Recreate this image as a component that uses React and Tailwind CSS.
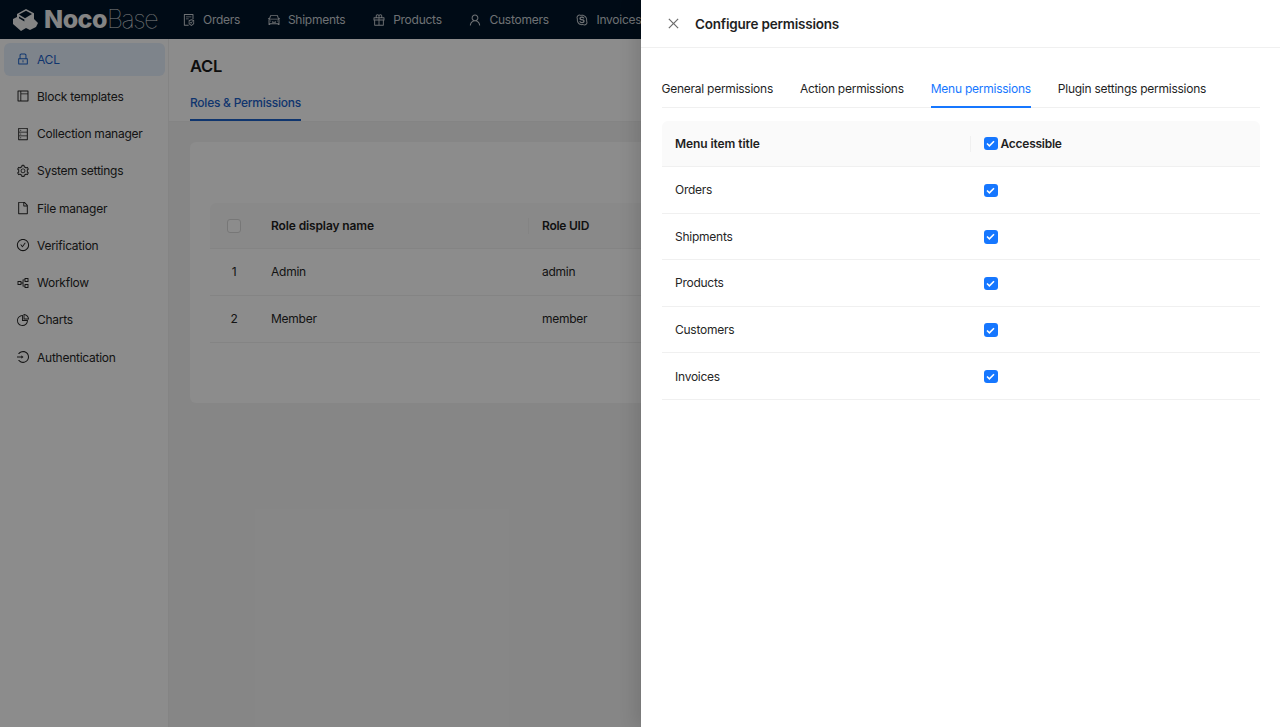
import {
  AiOutlineFileProtect, AiOutlineCar, AiOutlineGift, AiOutlineUser, AiOutlineSkype,
  AiOutlineLock, AiOutlineLayout, AiOutlineDatabase, AiOutlineSetting, AiOutlineFile,
  AiOutlineCheckCircle, AiOutlinePartition, AiOutlinePieChart, AiOutlineLogin, AiOutlineClose,
} from "react-icons/ai";

const topMenu = [
  { label: "Orders", icon: AiOutlineFileProtect },
  { label: "Shipments", icon: AiOutlineCar },
  { label: "Products", icon: AiOutlineGift },
  { label: "Customers", icon: AiOutlineUser },
  { label: "Invoices", icon: AiOutlineSkype },
];

const sideMenu = [
  { label: "ACL", icon: AiOutlineLock, active: true },
  { label: "Block templates", icon: AiOutlineLayout },
  { label: "Collection manager", icon: AiOutlineDatabase },
  { label: "System settings", icon: AiOutlineSetting },
  { label: "File manager", icon: AiOutlineFile },
  { label: "Verification", icon: AiOutlineCheckCircle },
  { label: "Workflow", icon: AiOutlinePartition },
  { label: "Charts", icon: AiOutlinePieChart },
  { label: "Authentication", icon: AiOutlineLogin },
];

const tabs = ["General permissions", "Action permissions", "Menu permissions", "Plugin settings permissions"];
const menuItems = ["Orders", "Shipments", "Products", "Customers", "Invoices"];

const Check = () => (
  <span className="w-[13.5px] h-[13.5px] rounded-[3px] bg-[#1677ff] flex items-center justify-center shrink-0">
    <svg width="9" height="7" viewBox="0 0 9 7" fill="none">
      <path d="M1 3.5 3.4 5.8 8 1.2" stroke="#fff" strokeWidth="1.6" />
    </svg>
  </span>
);

const Logo = () => (
  <div className="flex items-center pl-[13px] w-[170px] shrink-0">
    <svg width="25" height="22" viewBox="0 0 25 22" className="shrink-0">
      <path d="M4 5 13 0 21 4.3 21 10 25 14 23 18 17 21 13 19 8 22 0 15 0 10 4 8Z" fill="#f0f0f0" />
      <path d="M6 5.6 13 1.8 19 5 12 9.2Z" fill="#001529" />
      <path d="M6 7.4 11.4 10.6 11.4 12.4 6 9.2Z" fill="#001529" />
    </svg>
    <span className="ml-[6px] text-[25px] leading-none font-extrabold text-[#f0f0f0] tracking-[-0.5px]">Noco</span>
    <span className="ml-[0px] text-[25px] leading-none font-thin text-[#e8e8e8] tracking-[-1.4px]">Base</span>
  </div>
);

export default function App() {
  return (
    <div className="relative h-[727px] w-[1280px] overflow-hidden bg-[#f5f5f5] text-[12px] tracking-[-0.25px] text-[#262626] font-['Inter',sans-serif]">
      <header className="flex h-[39px] items-center bg-[#001529] overflow-hidden">
        <Logo />
        <nav className="flex items-center gap-[26.7px] pl-[12px]">
          {topMenu.map(({ label, icon: Icon }) => (
            <div key={label} className="flex items-center gap-[7px] text-[#c9ced3] whitespace-nowrap">
              <Icon className="text-[14px] shrink-0" />
              <span className="pt-[1px]">{label}</span>
            </div>
          ))}
        </nav>
      </header>

      <div className="flex h-[688px]">
        <aside className="w-[169px] shrink-0 bg-white border-r border-[#f0f0f0] pl-[4px] pr-[3px] pt-[3.5px] flex flex-col gap-[4px]">
          {sideMenu.map(({ label, icon: Icon, active }) => (
            <div
              key={label}
              className={`flex items-center gap-[7px] h-[33.25px] pl-[12px] rounded-[6px] ${active ? "bg-[#e6f0fd] text-[#1c62c9]" : "text-[#262626]"}`}
            >
              <Icon className="text-[14px] shrink-0" />
              <span className="pt-[1px]">{label}</span>
            </div>
          ))}
        </aside>

        <main className="flex-1 min-w-0">
          <div className="h-[83px] bg-white pl-[21px] pt-[17px] border-b border-[#f0f0f0]">
            <h1 className="text-[16.5px] leading-[20px] font-semibold text-[#1a1a1a]">ACL</h1>
            <div className="mt-[18px] inline-block h-[27px] border-b-2 border-[#1c62c9] font-medium text-[#1c62c9]">
              Roles &amp; Permissions
            </div>
          </div>

          <div className="ml-[21px] mt-[20px] h-[261px] rounded-[6px] bg-white pl-[20px] pt-[61px]">
            <div className="flex h-[46px] items-center rounded-t-[6px] bg-[#fafafa] border-b border-[#f0f0f0] font-semibold text-[#1f1f1f]">
              <div className="w-[48px] flex justify-center">
                <span className="w-[14px] h-[14px] rounded-[3px] bg-white border border-[#d9d9d9]" />
              </div>
              <div className="w-[13px]" />
              <div className="w-[258px] h-[16px] flex items-center border-r border-[#f0f0f0]">
                <span className="pt-[1px] tracking-[-0.12px]">Role display name</span>
              </div>
              <div className="pl-[13px] pt-[1px] whitespace-nowrap">Role UID</div>
            </div>
            {[["1", "Admin", "admin"], ["2", "Member", "member"]].map(([n, name, uid]) => (
              <div key={n} className="flex h-[47px] items-center border-b border-[#f0f0f0]">
                <div className="w-[48px] text-center">{n}</div>
                <div className="w-[13px]" />
                <div className="w-[258px]">{name}</div>
                <div className="pl-[13px]">{uid}</div>
              </div>
            ))}
          </div>
        </main>
      </div>

      {/* mask + drawer sit over the page */}
      <div className="absolute inset-0 bg-black/45" />
      <div className="absolute top-0 right-0 bottom-0 w-[639px] bg-white shadow-[-6px_0_16px_rgba(0,0,0,0.12)]">
        <div className="flex h-[48px] items-center border-b border-[#f0f0f0] pl-[25px]">
          <AiOutlineClose className="text-[15px] text-[#6b6b6b]" />
          <span className="ml-[14px] pt-[1px] text-[13.5px] tracking-[-0.2px] font-semibold text-[#1f1f1f]">Configure permissions</span>
        </div>

        <div className="px-[20.5px]">
          <div className="mt-[28px] flex h-[32px] gap-[27px] border-b border-[#f0f0f0] text-[#1f1f1f]">
            {tabs.map((t) => (
              <div
                key={t}
                className={`h-[32px] pt-[3.5px] whitespace-nowrap ${t === "Menu permissions" ? "text-[#1677ff] border-b-2 border-[#1677ff]" : ""}`}
              >
                {t}
              </div>
            ))}
          </div>

          <div className="mt-[13px] flex h-[46px] items-center rounded-t-[6px] bg-[#fafafa] border-b border-[#f0f0f0] font-semibold text-[#1f1f1f]">
            <div className="w-[309px] h-[16px] flex items-center pl-[13.5px] border-r border-[#f0f0f0]">
              <span className="pt-[1px] tracking-[-0.08px]">Menu item title</span>
            </div>
            <div className="flex items-center gap-[3px] pl-[13.5px]">
              <Check />
              <span className="pt-[1px]">Accessible</span>
            </div>
          </div>
          {menuItems.map((m) => (
            <div key={m} className="flex h-[46.6px] items-center border-b border-[#f0f0f0]">
              <div className="w-[309px] pl-[13.5px] pt-[1px]">{m}</div>
              <div className="pl-[13.5px] pt-[1px]">
                <Check />
              </div>
            </div>
          ))}
        </div>
      </div>
    </div>
  );
}
